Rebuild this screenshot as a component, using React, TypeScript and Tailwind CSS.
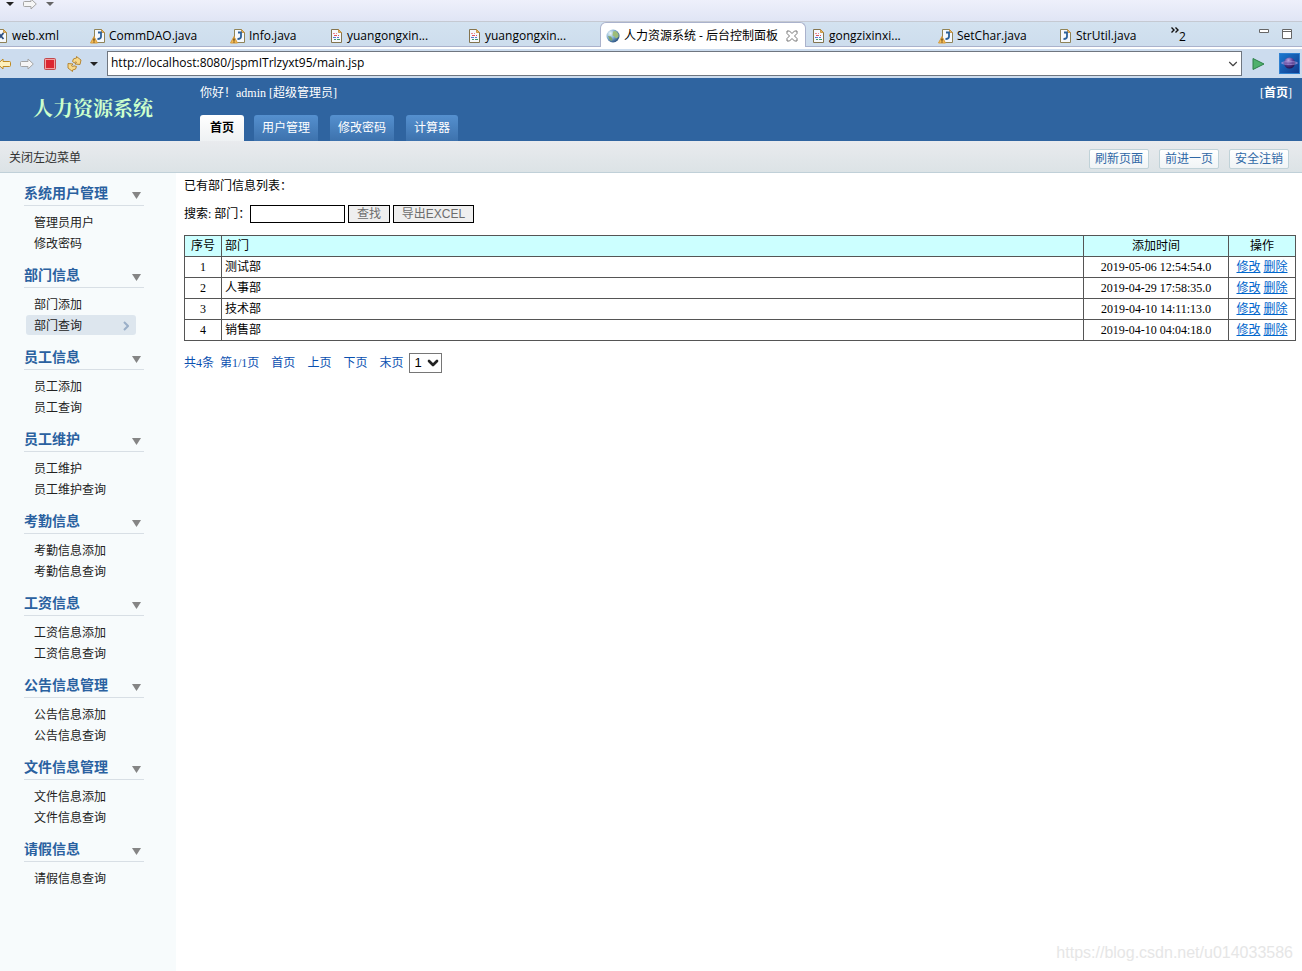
import { useState } from "react";
import { ChevronDown } from "lucide-react";

const menuGroups = [
  { title: "系统用户管理", items: ["管理员用户", "修改密码"] },
  { title: "部门信息", items: ["部门添加", "部门查询"] },
  { title: "员工信息", items: ["员工添加", "员工查询"] },
  { title: "员工维护", items: ["员工维护", "员工维护查询"] },
  { title: "考勤信息", items: ["考勤信息添加", "考勤信息查询"] },
  { title: "工资信息", items: ["工资信息添加", "工资信息查询"] },
  { title: "公告信息管理", items: ["公告信息添加", "公告信息查询"] },
  { title: "文件信息管理", items: ["文件信息添加", "文件信息查询"] },
  { title: "请假信息", items: ["请假信息查询"] },
];

const departments = [
  { id: 1, name: "测试部", time: "2019-05-06 12:54:54.0" },
  { id: 2, name: "人事部", time: "2019-04-29 17:58:35.0" },
  { id: 3, name: "技术部", time: "2019-04-10 14:11:13.0" },
  { id: 4, name: "销售部", time: "2019-04-10 04:04:18.0" },
];

const editorTabs = [
  { label: "web.xml", icon: "xml", width: "w-[94px] -ml-[4px]" },
  { label: "CommDAO.java", icon: "warn", width: "w-[140px]" },
  { label: "Info.java", icon: "warn", width: "w-[101px]" },
  { label: "yuangongxin...", icon: "jsp", width: "w-[138px]" },
  { label: "yuangongxin...", icon: "jsp", width: "w-[131px]" },
  { label: "人力资源系统 - 后台控制面板", icon: "globe", width: "w-[206px]" },
  { label: "gongzixinxi...", icon: "jsp", width: "w-[132px] pl-[7px]" },
  { label: "SetChar.java", icon: "warn", width: "w-[122px]" },
  { label: "StrUtil.java", icon: "java", width: "w-[105px]" },
];

const topTabs = ["用户管理", "修改密码", "计算器"];
const toolButtons = ["刷新页面", "前进一页", "安全注销"];

function FileIcon({ kind }: { kind: string }) {
  if (kind === "globe") {
    return (
      <svg width="14" height="14" viewBox="0 0 14 14" className="shrink-0">
        <defs>
          <radialGradient id="globe" cx="0.3" cy="0.3" r="0.8">
            <stop offset="0" stopColor="#eef8fa" />
            <stop offset="0.5" stopColor="#7fadd0" />
            <stop offset="1" stopColor="#1f4676" />
          </radialGradient>
        </defs>
        <circle cx="7" cy="7" r="6.5" fill="url(#globe)" />
        <path d="M7 2.500l3-.5 2.500 3v3l-2.500 1.500-1.500-2-2-1z" fill="#9dbd78" />
        <path d="M2 7l3 .5 1.500 2.500-1 2-2-1.500z" fill="#7fa56a" />
      </svg>
    );
  }
  const wide = kind === "warn";
  return (
    <svg
      width={wide ? 15 : 12}
      height="16"
      viewBox={wide ? "-4 0 15 16" : "0 0 12 16"}
      className="shrink-0"
    >
      <path
        d="M.5 1.500h7l3 3v10h-10z"
        fill="#f6f9fd"
        stroke={kind === "jsp" ? "#83744f" : "#8f8358"}
      />
      <path d="M7.500 1.500l3 3h-3z" fill="#e4b765" stroke="#c08a34" strokeWidth="0.8" />
      {kind === "jsp" && (
        <g strokeWidth="1" shapeRendering="crispEdges">
          <path d="M2 5.500h2M5 5.500h1" stroke="#ee8a90" />
          <path d="M3 7.500h3M7 7.500h1" stroke="#e2525e" />
          <path d="M2 9.500h3M6 9.500h2" stroke="#5b78cd" />
          <path d="M3 11.500h2M6 11.500h3" stroke="#3f9a72" />
        </g>
      )}
      {kind === "xml" && (
        <path d="M2.500 5l5 6M7.500 5l-5 6" stroke="#2d4f82" strokeWidth="1.800" fill="none" />
      )}
      {(kind === "java" || kind === "warn") && (
        <path d="M4 4.500h3v4q0 2.500-3.500 2.500" stroke="#2b6099" strokeWidth="1.800" fill="none" />
      )}
      {wide && (
        <g>
          <path d="M0 8.500l3.500 6.500h-7z" fill="#f6bd55" stroke="#d79a3c" strokeLinejoin="round" />
          <path d="M0 10.500v2.200M0 13.400v1.100" stroke="#4a3008" strokeWidth="1.200" />
        </g>
      )}
    </svg>
  );
}

function Caret({ color }: { color: string }) {
  return (
    <svg width="8" height="4" viewBox="0 0 8 4">
      <path d="M0 0h8l-4 4z" fill={color} />
    </svg>
  );
}

function ArrowIcon({ back }: { back?: boolean }) {
  return (
    <svg width="14" height="12" viewBox="0 0 14 12">
      <path
        d={
          back
            ? "M.7 6l5.300-5v2.500h6.500q1 0 1 1v3q0 1-1 1h-6.500v2.500z"
            : "M13.300 6l-5.300-5v2.500h-6.500q-1 0-1 1v3q0 1 1 1h6.500v2.500z"
        }
        fill={back ? "#fdf0bd" : "#f6f6f6"}
        stroke={back ? "#bf8a22" : "#a4a4a4"}
        strokeLinejoin="round"
      />
    </svg>
  );
}

function EditorTabs() {
  return (
    <div className="flex h-[25px] min-w-0 border-b border-[#aab2cc] bg-linear-to-b from-[#d3e2f0] to-[#cddded]">
      {editorTabs.map((tab, i) => {
        const active = tab.icon === "globe";
        return (
          <button
            key={i}
            className={`flex h-[25px] shrink-0 items-center gap-1 whitespace-nowrap pt-[2px] text-left text-xs text-black ${tab.width} ${
              active
                ? "rounded-t-md border border-b-0 border-[#aab2cc] bg-white pl-[5px]"
                : ""
            }`}
          >
            <FileIcon kind={tab.icon} />
            <span>{tab.label}</span>
            {active && (
              <svg width="12" height="12" viewBox="0 0 12 12" className="ml-1">
                <path
                  d="M1 1h2.500l2.500 2.500 2.500-2.500h2.500v2.500l-2.500 2.500 2.500 2.500v2.500h-2.500l-2.500-2.500-2.500 2.500h-2.500v-2.500l2.500-2.500-2.500-2.500z"
                  fill="#fff"
                  stroke="#777"
                />
              </svg>
            )}
          </button>
        );
      })}
      <button className="flex items-center pl-[6px] text-xs" aria-label="更多标签">
        <svg width="8" height="6" viewBox="0 0 8 6" className="mb-2">
          <path d="M.5.500l2.500 2.500-2.500 2.500M4.500.500l2.500 2.500-2.500 2.500" fill="none" stroke="#111" strokeWidth="1.400" />
        </svg>
        <span className="pt-[6px]">2</span>
      </button>
      <div className="ml-auto flex items-center gap-3 pr-[9px]">
        <svg width="11" height="12" viewBox="0 0 11 12">
          <path d="M.5 1.500h9v3h-9z" fill="#fff" stroke="#666" />
        </svg>
        <svg width="11" height="12" viewBox="0 0 11 12">
          <path d="M.5 1.500h9v9h-9zM.5 3.500h9" fill="#fff" stroke="#666" />
        </svg>
      </div>
    </div>
  );
}

function AddressBar() {
  return (
    <div className="flex h-[31px] items-center border-t-2 border-white bg-[#ccdcee] pr-[2px]">
      <div className="flex w-[107px] shrink-0 items-center">
        <button className="-ml-[3px]" aria-label="后退">
          <ArrowIcon back />
        </button>
        <button className="ml-[9px]" aria-label="前进">
          <ArrowIcon />
        </button>
        <button className="ml-[10px]" aria-label="停止">
          <svg width="12" height="12" viewBox="0 0 12 12">
            <rect x="0.500" y="0.500" width="11" height="11" rx="1" fill="#f3a0a0" stroke="#c0484c" />
            <rect x="2" y="2" width="8" height="8" fill="#dc2531" />
          </svg>
        </button>
        <button className="ml-[11px]" aria-label="刷新">
          <svg width="15" height="16" viewBox="0 0 15 16">
            <g fill="#f8d98a" stroke="#b07d25" strokeWidth="0.900" strokeLinejoin="round">
              <path d="M5.500 5.500q0-3.500 4-3.500l0-1.500 4.500 3.500-1 4.500-5-.5 1.500-1.800q-1.500-1-2 .8z" />
              <path d="M9.500 10.500q0 3.500-4 3.500l0 1.500-4.500-3.500v-4.500l5 .5-1.500 1.800q1.500 1.500 2.500 0z" />
            </g>
          </svg>
        </button>
        <button className="ml-2" aria-label="刷新选项">
          <Caret color="#222" />
        </button>
      </div>
      <div className="relative min-w-0 flex-1">
        <input
          aria-label="地址"
          className="block h-[25px] w-full border border-[#6f7680] bg-white pb-[3px] pl-[3px] text-xs text-black outline-none"
          defaultValue="http://localhost:8080/jspmITrlzyxt95/main.jsp"
        />
        <ChevronDown className="absolute right-[2px] top-[6px] h-[14px] w-[14px] text-[#444]" />
      </div>
      <button className="ml-[10px]" aria-label="转到">
        <svg width="13" height="12" viewBox="0 0 13 12">
          <path d="M1 .500l11 5.500-11 5.500z" fill="#4fb16c" stroke="#2c8049" />
        </svg>
      </button>
      <svg width="21" height="21" viewBox="0 0 21 21" className="ml-[14px] shrink-0">
        <defs>
          <linearGradient id="sky" x1="0" y1="0" x2="1" y2="1">
            <stop offset="0" stopColor="#1b7ad0" />
            <stop offset="1" stopColor="#123a8c" />
          </linearGradient>
          <radialGradient id="planet" cx="0.4" cy="0.25" r="0.75">
            <stop offset="0" stopColor="#b9a6de" />
            <stop offset="0.5" stopColor="#5f449c" />
            <stop offset="1" stopColor="#24104e" />
          </radialGradient>
        </defs>
        <rect x="0.500" y="0.500" width="20" height="20" fill="url(#sky)" stroke="#2f80d0" />
        <circle cx="10.500" cy="10" r="5.500" fill="url(#planet)" />
        <ellipse cx="10.500" cy="10" rx="8" ry="1.300" fill="none" stroke="#a592d6" strokeWidth="0.900" />
      </svg>
    </div>
  );
}

function Header() {
  return (
    <header className="flex h-[63px] bg-[#2f64a0] text-xs text-white">
      <h1 className="w-[200px] shrink-0 pl-[33px] pt-[15px] font-['Noto_Serif_CJK_SC','Noto_Sans_CJK_SC',serif] text-xl leading-[30px] font-bold text-[#ccffcc]">
        人力资源系统
      </h1>
      <div className="flex flex-1 flex-col justify-between">
        <div className="flex justify-between pr-[10px] leading-[30px]">
          <span>你好！admin [超级管理员]</span>
          <a href="#" className="font-bold">
            <span className="font-normal">[</span>首页<span className="font-normal">]</span>
          </a>
        </div>
        <nav className="flex gap-3 leading-[26px]">
          <a
            href="#"
            className="-mr-[2px] w-11 rounded-t-[3px] bg-linear-to-b from-white to-[#eef1f3] text-center font-bold text-black"
          >
            首页
          </a>
          {topTabs.map((tab) => (
            <a
              key={tab}
              href="#"
              className="rounded-t-[3px] bg-linear-to-b from-[#5590cf] to-[#3d72ad] px-2"
            >
              {tab}
            </a>
          ))}
        </nav>
      </div>
    </header>
  );
}

function Sidebar() {
  const [current, setCurrent] = useState("部门查询");

  return (
    <aside className="w-[176px] shrink-0 bg-[#f7fbfc] pl-6">
      {menuGroups.map((group) => (
        <section key={group.title} className="w-[120px] pb-px">
          <h2 className="flex h-[33px] items-center justify-between border-b border-[#d8dfe5] pr-[3px] pt-[10px] text-sm font-bold text-[#2a61a0]">
            {group.title}
            <svg width="9" height="7" viewBox="0 0 9 7" className="mt-[2px]">
              <path d="M0 0h9l-4.500 7z" fill="#858585" />
            </svg>
          </h2>
          <ul className="pt-[6px]">
            {group.items.map((item) => (
              <li key={item} className="mb-px ml-[2px] w-[110px]">
                <a
                  href="#"
                  onClick={() => setCurrent(item)}
                  className={`flex h-5 items-center justify-between rounded-[3px] pl-2 pr-[7px] pt-[2px] text-xs text-[#222] ${
                    item === current ? "bg-[#dde6ee]" : ""
                  }`}
                >
                  {item}
                  {item === current && (
                    <svg width="6" height="10" viewBox="0 0 6 10">
                      <path d="M1 1l4 4-4 4" fill="none" stroke="#9aafc8" strokeWidth="2" />
                    </svg>
                  )}
                </a>
              </li>
            ))}
          </ul>
        </section>
      ))}
    </aside>
  );
}

function DepartmentList() {
  return (
    <main className="min-w-0 flex-1 bg-white pl-2 pr-[6px] text-xs text-black">
      <p className="pt-[3px] leading-5">已有部门信息列表：</p>
      <form className="mt-2 flex h-5 items-center">
        <label htmlFor="dept" className="w-[66px] whitespace-nowrap">
          搜索: 部门：
        </label>
        <input id="dept" className="h-[18px] w-[95px] border border-black bg-white px-1" />
        <button
          type="button"
          className="ml-[3px] h-[18px] w-[42px] border border-black bg-[#efefef] font-['Liberation_Sans','Noto_Sans_CJK_SC',sans-serif] leading-4 text-[#6d6d6d]"
        >
          查找
        </button>
        <button
          type="button"
          className="ml-[3px] h-[18px] w-[81px] border border-black bg-[#efefef] font-['Liberation_Sans','Noto_Sans_CJK_SC',sans-serif] leading-4 text-[#6d6d6d]"
        >
          导出EXCEL
        </button>
      </form>
      <table className="mt-[11px] w-full table-fixed border-collapse leading-5 [&_td]:border [&_td]:border-[#555] [&_td]:p-0 [&_th]:border [&_th]:border-[#555] [&_th]:p-0 [&_th]:font-normal">
        <thead>
          <tr className="h-[21px] bg-[#ccffff]">
            <th className="w-[37px]">序号</th>
            <th className="text-left">
              <span className="pl-[3px]">部门</span>
            </th>
            <th className="w-[145px]">添加时间</th>
            <th className="w-[67px]">操作</th>
          </tr>
        </thead>
        <tbody>
          {departments.map((dept) => (
            <tr key={dept.id} className="h-[21px]">
              <td className="text-center">{dept.id}</td>
              <td>
                <span className="pl-[3px]">{dept.name}</span>
              </td>
              <td className="text-center">{dept.time}</td>
              <td className="text-center text-[#0066cc]">
                <a href="#" className="underline">
                  修改
                </a>{" "}
                <a href="#" className="underline">
                  删除
                </a>
              </td>
            </tr>
          ))}
        </tbody>
      </table>
      <div className="mt-3 flex items-center text-[#0a50b0]">
        <span>共4条</span>
        <span className="ml-[6px]">第1/1页</span>
        <div className="mx-3 flex gap-3">
          <a href="#">首页</a>
          <a href="#">上页</a>
          <a href="#">下页</a>
          <a href="#" className="-mr-[6px]">
            末页
          </a>
        </div>
        <div className="relative">
          <select
            aria-label="页码"
            className="block h-5 w-[33px] appearance-none border border-[#767676] bg-white pl-1 font-['Liberation_Sans',sans-serif] text-[13px] leading-4 text-black"
          >
            <option>1</option>
          </select>
          <ChevronDown
            strokeWidth={4}
            className="pointer-events-none absolute right-px top-[2px] h-4 w-4 text-[#222]"
          />
        </div>
      </div>
    </main>
  );
}

export default function App() {
  return (
    <div className="relative flex min-h-screen flex-col overflow-x-hidden bg-white font-['Liberation_Serif','Noto_Sans_CJK_SC',serif]">
      <div className="font-['Open_Sans','Noto_Sans_CJK_SC',sans-serif]">
        <div className="flex h-[22px] items-start border-b border-[#c5c9d2] bg-linear-to-b from-[#eef0fb] to-[#e0e5f5] pl-[6px]">
          <span className="flex h-2 items-center gap-[9px]">
            <Caret color="#222" />
            <ArrowIcon />
            <Caret color="#666" />
          </span>
        </div>
        <EditorTabs />
        <AddressBar />
      </div>
      <Header />
      <div className="flex h-8 items-center justify-between border-b border-[#c0d0d8] bg-linear-to-b from-[#e9ebee] to-[#dce3e6] pl-[9px] pr-[13px] text-xs">
        <button className="pt-[2px] text-[#333]">关闭左边菜单</button>
        <div className="flex gap-[10px] pt-1">
          {toolButtons.map((label) => (
            <button
              key={label}
              className="h-5 w-[60px] rounded-[2px] border border-[#c0d2d8] bg-linear-to-b from-white to-[#f0f4f6] text-[#2f68a6]"
            >
              {label}
            </button>
          ))}
        </div>
      </div>
      <div className="flex flex-1">
        <Sidebar />
        <DepartmentList />
      </div>
      <span className="pointer-events-none absolute bottom-[6px] right-[9px] font-['Liberation_Sans',sans-serif] text-base text-[#e6e6e6]">
        https://blog.csdn.net/u014033586
      </span>
    </div>
  );
}
